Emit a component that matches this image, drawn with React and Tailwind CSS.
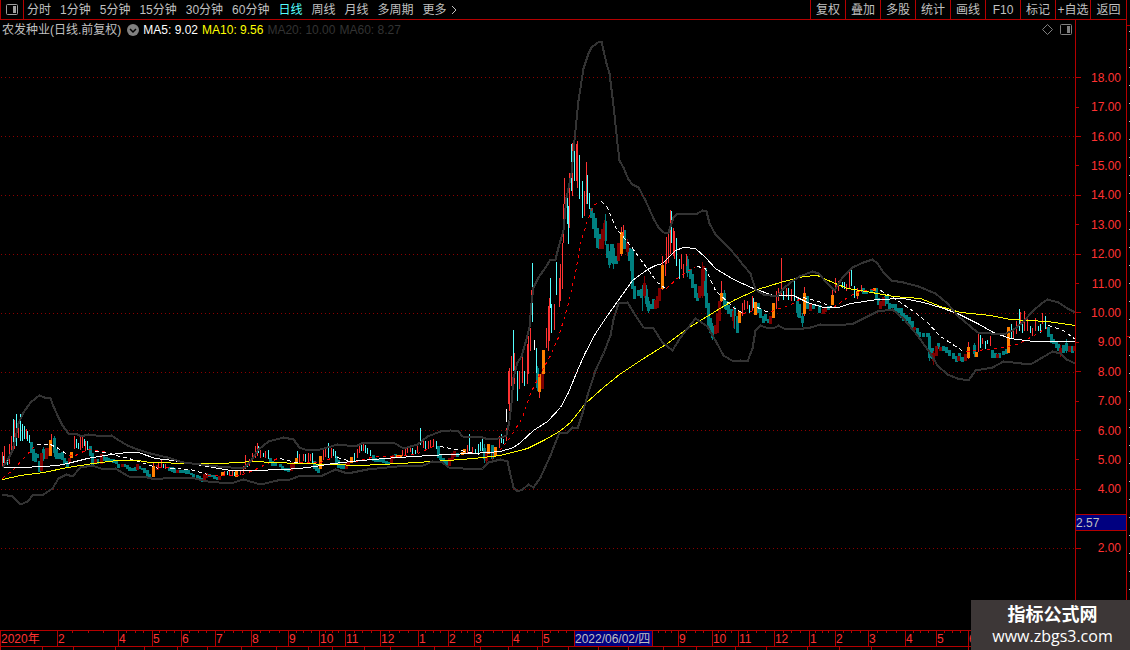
import React, { useState } from 'react';

const periodos = ['分时', '1分钟', '5分钟', '15分钟', '30分钟', '60分钟', '日线', '周线', '月线', '多周期'];
const acciones = ['复权', '叠加', '多股', '统计', '画线', 'F10', '标记', '+自选', '返回'];
const precios = [18, 17, 16, 15, 14, 13, 12, 11, 10, 9, 8, 7, 6, 5, 4, 3, 2];

// Cada mes con la posición donde empieza dentro de la escala de tiempo
const ANCHO = 1130;
const meses = [
  ['2020年', 0], ['2', 57], ['4', 118], ['5', 152], ['6', 181], ['7', 215], ['8', 251], ['9', 288],
  ['10', 319], ['11', 345], ['12', 380], ['1', 418], ['2', 448], ['3', 474], ['4', 512], ['5', 542],
  ['2022/06/02/四', 574], ['', 652], ['9', 678], ['10', 712], ['11', 738], ['12', 774], ['1', 809],
  ['2', 835], ['3', 868], ['4', 905], ['5', 936], ['6', 968],
];
const marcas = [0, 42, 73, 115, 144, 177, 207, 241, 276, 308, 332, 364, 390, 434, 480, 508, 537, 568, 598, 628, 663, 696, 735, 766, 807, 839, 871, 968];

const bandaSuperior = '2,467 7,460 12,450 15,437 18,423 23,412 30,402 35,398 39,395 44,397 50,398 53,406 58,417 62,425 68,433 76,433 80,436 88,434 103,436 111,435 117,439 127,445 137,449 150,453 167,457 183,462 200,464 217,466 243,468 250,461 258,449 268,441 283,437 293,439 299,447 307,450 320,449 337,444 355,446 363,442 393,442 403,448 417,444 427,436 440,431 450,430 458,431 462,436 482,437 488,439 498,438 506,435 509,420 511,403 513,377 517,362 521,356 525,342 529,327 531,303 533,287 538,277 545,267 550,259 555,259 558,247 563,230 566,197 571,173 574,140 578,100 583,68 588,53 591,47 595,44 599,41 601,41 603,50 606,63 609,73 613,105 617,143 619,160 623,167 628,179 632,184 638,187 645,200 653,218 658,227 663,232 668,232 673,217 677,213 697,213 702,210 706,211 709,223 715,234 722,241 729,248 736,256 743,265 750,273 755,289 763,294 777,296 783,288 790,282 799,276 812,271 818,273 827,283 834,290 842,277 852,267 863,262 872,259 877,263 883,272 891,280 903,282 918,286 935,293 947,303 957,315 970,326 977,332 1003,334 1012,330 1022,322 1033,310 1041,303 1047,299 1058,302 1067,308 1075,312';
const bandaInferior = '2,494 12,496 20,504 27,501 33,494 43,494 52,488 58,478 66,474 72,476 80,467 92,465 103,469 115,468 128,476 143,476 155,479 170,477 190,477 207,481 230,483 243,479 260,484 277,480 290,479 300,475 322,475 335,469 347,473 367,469 397,466 423,465 432,461 442,462 448,467 477,469 482,468 488,462 500,459 507,461 509,470 513,487 517,491 522,489 528,484 533,487 540,477 550,455 555,442 559,432 567,432 572,427 577,428 582,413 587,395 595,370 603,353 610,335 613,319 618,303 627,302 635,315 643,327 653,328 662,342 672,350 680,337 687,328 695,318 707,326 715,340 723,355 733,361 740,360 747,361 752,348 755,330 760,325 765,327 773,328 778,325 783,328 803,328 810,327 820,324 838,325 853,323 863,318 877,311 892,309 903,318 917,335 930,353 937,365 947,374 957,378 968,380 975,370 992,367 1003,361 1030,364 1042,357 1052,351 1060,353 1066,359 1075,363';
const mediaBlanca = '2,467 20,467 43,466 57,465 67,463 87,458 110,454 127,452 138,452 155,458 173,460 190,463 213,467 230,470 253,470 283,469 299,468 315,466 333,463 360,460 397,457 447,454 473,453 500,451 513,447 520,442 533,430 547,421 560,407 568,392 577,370 585,352 595,333 607,315 617,301 632,280 647,269 655,265 662,263 675,250 683,247 695,248 705,257 715,268 733,279 753,288 773,295 793,295 807,302 823,307 838,307 850,303 877,299 903,298 923,302 940,307 957,313 977,323 993,332 1010,338 1033,341 1075,341';
const mediaAmarilla = '2,479 20,475 43,472 67,467 93,463 117,460 137,460 150,462 190,463 220,463 253,461 273,462 300,463 360,465 400,463 447,460 473,458 500,455 527,448 543,440 559,431 570,422 585,403 603,387 619,374 640,360 667,343 687,328 713,312 733,300 757,289 780,282 803,276 817,275 830,281 847,288 877,293 893,296 920,298 940,306 960,312 990,315 1010,319 1047,321 1075,325';

// La media de 20 cambia de color según la tendencia
const media20Sube = ['2,478 13,469 25,456 35,445', '68,455 75,455 87,449 108,452', '158,467 170,467', '207,475 240,475 253,470 265,464 277,458', '299,462 320,462 333,457', '355,461 375,456 400,456 417,453 433,446', '499,450 510,437 522,417 530,393 540,373 550,355 558,337 568,303 576,267 580,243 587,220 593,205 599,201', '666,288 680,275 695,266', '743,313 753,310', '771,311 793,303 800,298', '833,307 850,295 860,291 876,288', '966,351 997,348 1017,344 1030,337 1047,327'];
const media20Baja = ['36,444 50,444 58,448 68,455', '95,451 108,452 115,455 125,457 135,460 150,465 158,468', '170,468 190,469 207,474', '280,458 299,463', '337,457 350,461', '440,446 455,449 480,454', '601,201 607,207 615,227 620,233 630,245 643,263 657,282 665,288', '697,266 705,268 715,290 733,307 743,313', '757,307 768,312', '803,297 818,301 833,307', '880,290 893,297 913,311 927,322 940,336 963,351', '1048,325 1063,330 1075,339'];

// Velas: "x,máximo,mínimo"
const rojas = '2,451,465 4,445,463 7,457,462 9,443,463 11,435,452 14,419,448 18,422,437 26,428,438 51,433,455 74,435,448 80,435,449 82,436,447 85,440,450 153,462,476 158,461,467 161,458,466 165,463,468 224,470,475 229,469,474 232,470,475 240,470,474 243,465,472 245,454,468 249,458,465 252,452,460 255,445,457 257,442,455 260,449,457 265,450,457 299,453,463 303,453,460 308,452,461 310,453,460 323,449,459 325,448,456 331,447,457 357,448,457 359,443,452 363,443,450 402,449,455 405,447,454 407,446,452 410,444,451 417,443,452 423,437,447 428,440,448 430,439,447 433,438,446 467,444,452 472,446,452 499,435,447 506,427,440 508,370,403 509,367,410 511,355,385 514,352,383 519,370,388 522,353,382 527,343,383 528,335,373 530,327,350 531,289,313 539,373,397 546,327,347 548,305,350 549,297,340 554,303,329 556,273,290 559,277,306 560,263,300 562,242,288 563,203,242 564,177,203 569,172,227 572,142,195 576,143,180 577,140,187 584,190,215 586,161,203 621,226,255 623,224,235 662,255,289 665,259,275 666,236,263 668,232,262 670,209,253 673,227,255 674,230,258 681,253,268 683,263,277 686,253,265 721,280,301 742,302,315 744,299,309 747,300,308 752,295,310 776,290,308 778,287,300 781,257,295 786,287,296 791,288,300 804,286,315 832,289,304 835,277,292 838,280,290 846,283,290 849,270,287 861,284,291 857,287,298 968,341,358 978,333,351 982,337,343 990,335,345 1013,327,337 1016,320,333 1020,311,323 1024,310,330 1027,318,330 1032,327,335 1035,317,330 1042,312,323';
const celestes = '3,455,462 7,459,464 13,418,443 16,413,445 20,413,440 22,423,440 24,425,438 27,430,440 29,434,442 76,438,447 78,442,448 84,438,445 87,440,449 163,463,467 227,470,474 234,471,475 247,462,466 258,445,452 263,452,456 268,449,458 297,450,463 305,453,461 312,452,463 328,442,457 333,448,455 335,450,457 354,452,460 361,441,450 365,444,452 367,447,453 370,449,455 412,447,453 415,449,453 420,427,444 425,440,449 436,440,448 469,433,450 475,448,452 478,443,452 480,441,450 482,438,450 501,433,442 503,438,443 513,329,370 517,370,400 524,370,385 532,262,321 536,347,372 550,277,307 551,303,332 556,261,294 567,188,223 568,205,243 571,143,190 574,150,180 579,154,198 582,180,217 587,174,203 589,192,208 671,210,242 676,237,265 679,258,278 749,304,312 753,297,307 783,290,299 788,287,299 794,280,300 842,281,287 844,281,288 851,268,285 854,285,297 980,334,347 985,340,348 987,339,343 1011,323,337 1019,308,330 1022,320,332 1030,325,332 1038,325,330 1040,323,332 1045,315,328';
const blancas = '506,408,421 534,339,349';
const verdes = '31,441,452 33,448,460 35,452,461 37,453,457 39,460,471 43,448,458 54,437,452 56,448,458 59,452,458 62,451,459 64,457,463 67,460,467 90,445,455 92,452,465 97,458,463 103,455,460 106,456,460 108,457,460 111,458,461 113,458,462 116,460,463 118,463,467 124,463,466 127,464,468 129,466,470 132,467,470 135,466,470 139,465,468 142,467,469 144,467,472 147,469,475 149,473,477 169,466,470 172,466,471 174,467,472 180,469,472 183,469,472 186,469,473 188,469,473 191,472,474 193,473,476 197,474,477 199,475,479 202,477,481 209,473,476 212,474,476 214,474,478 217,476,479 270,457,462 272,460,465 275,462,465 280,463,466 282,465,469 285,467,470 288,467,471 314,460,468 316,464,470 318,467,472 336,455,463 338,459,467 341,463,468 343,464,468 373,454,460 375,457,461 378,458,461 381,458,461 383,458,462 386,460,463 388,461,464 395,453,457 438,445,457 440,453,459 443,457,463 446,460,465 457,452,456 484,447,458 492,444,458 537,367,387 591,207,217 593,212,228 595,217,237 597,227,247 599,233,248 605,220,240 607,243,257 609,252,264 611,243,262 613,247,263 616,255,263 624,229,248 629,247,260 631,252,270 632,248,288 634,285,298 638,289,295 641,288,297 646,288,303 648,300,310 650,303,308 653,298,308 687,258,272 690,268,278 692,273,287 695,283,297 697,292,300 705,267,295 706,292,307 708,302,325 710,317,332 712,325,337 724,292,305 726,300,309 728,304,313 731,308,316 734,308,315 737,315,332 758,302,312 760,308,317 763,315,322 765,313,320 768,318,322 797,300,312 799,303,317 802,315,322 807,295,308 813,303,308 819,304,312 828,305,309 863,287,293 866,290,293 871,288,292 876,287,298 878,297,304 885,295,302 887,295,303 889,302,308 892,303,307 895,303,310 898,307,312 901,307,317 903,312,320 906,314,320 909,316,324 912,320,328 917,327,333 919,331,336 923,332,336 927,332,336 929,335,357 932,347,358 938,342,348 943,345,350 946,346,352 949,349,355 953,352,358 956,355,361 959,352,360 962,356,361 974,344,353 992,349,357 995,352,357 999,352,357 1003,350,354 1006,348,353 1048,326,336 1051,333,342 1053,338,343 1056,341,347 1058,343,350 1063,344,352 1066,342,350 1072,345,352';
const mechas = '54,435,456 43,446,460 484,443,462 537,365,390 605,213,244 609,250,267 613,243,268 646,284,306 648,296,312 631,248,272 687,255,276 724,289,308 734,305,328 712,322,339 797,296,316 802,312,326 885,293,305 929,332,360 1066,338,352 974,342,356 642,284,310';
const granates = '41,452,470 46,447,458 48,447,455 69,457,462 95,458,463 101,453,463 122,463,466 137,463,469 157,464,469 177,469,472 204,473,480 206,472,477 219,475,479 291,462,470 293,461,468 346,462,468 348,460,465 391,456,463 393,454,458 449,457,465 452,452,460 454,450,456 486,452,460 542,372,388 600,238,248 602,228,248 604,222,237 618,242,260 627,242,251 644,282,295 655,299,308 657,295,307 659,287,300 699,285,297 702,268,295 703,265,280 715,324,333 717,312,332 719,300,320 733,310,320 770,315,323 810,303,310 823,308,313 825,307,311 880,300,308 883,296,305 914,326,329 933,352,360 936,345,355 940,346,350 958,355,360 965,353,360 997,353,357 1060,347,353 1069,345,351 1074,345,350';
const mechasGranate = '486,450,465 644,275,297 702,261,297 627,238,255 492,452,462 933,350,364 733,306,327 604,219,240 1060,344,356';
const naranjas = '50,439,455 71,451,457 153,465,476 222,471,475 236,469,476 296,457,463 320,455,468 351,456,462 397,454,457 400,454,457 462,451,454 464,448,453 488,443,453 495,446,455 539,373,391 543,349,373 621,231,253 662,264,288 721,292,300 739,310,322 755,301,314 773,302,317 804,292,313 832,294,304 857,290,295 874,287,290 968,346,357 976,351,356 1008,326,352';

const aTrazo = velas =>
  velas.split(' ').map(vela => {
    const [x, alto, bajo] = vela.split(',');
    return `M${x} ${alto}V${bajo}`;
  }).join('');

const Grafico = () => (
  <svg
    viewBox="0 39 1075 591"
    preserveAspectRatio="none"
    shapeRendering="crispEdges"
    fill="none"
    className="block w-full flex-1 min-h-0"
  >
    <g transform="translate(0.5 0.5)">
      {precios.filter(p => p % 2 === 0).map(p => (
        <path key={p} d={`M0.5 ${Math.round(607 - p * 29.43)}H1075`} stroke="#8c0000" strokeDasharray="1 3" />
      ))}
      <path d={aTrazo(verdes)} stroke="#008080" strokeWidth="3" />
      <path d={aTrazo(granates)} stroke="#800000" strokeWidth="3" />
      <path d={aTrazo(mechasGranate)} stroke="#800000" />
      <path d={aTrazo(mechas)} stroke="#008080" />
      <path d={aTrazo(rojas)} stroke="#ff3232" />
      <path d={aTrazo(celestes)} stroke="#54ffff" />
      <path d={aTrazo(blancas)} stroke="#ffffff" />
      <path d={aTrazo(naranjas)} stroke="#ff8000" strokeWidth="3" />
      {media20Sube.map(puntos => (
        <polyline key={puntos} points={puntos} stroke="#ff0000" strokeDasharray="3 4" />
      ))}
      {media20Baja.map(puntos => (
        <polyline key={puntos} points={puntos} stroke="#ffffff" strokeDasharray="4 3" />
      ))}
      <polyline points={mediaAmarilla} stroke="#ffff00" />
      <polyline points={mediaBlanca} stroke="#ffffff" />
      <polyline points={bandaSuperior} stroke="#333333" strokeWidth="2" strokeLinejoin="round" />
      <polyline points={bandaInferior} stroke="#333333" strokeWidth="2" strokeLinejoin="round" />
    </g>
  </svg>
);

const IconoPanel = ({ className }) => (
  <svg viewBox="0 0 12 11" fill="none" className={className}>
    <rect x="0.5" y="0.5" width="11" height="10" rx="1" stroke="currentColor" />
    <rect x="7" y="2" width="3" height="7" fill="currentColor" />
  </svg>
);

const BarraSuperior = ({ periodo, setPeriodo }) => (
  <header className="flex h-5 shrink-0 justify-between border-b border-[#b40000]">
    <nav className="flex items-center gap-[9px]">
      <button aria-label="面板" className="-mr-1.5 flex h-full w-6 items-center justify-center border-x border-[#b40000]">
        <IconoPanel className="h-[11px] w-3 text-[#a0a0a0]" />
      </button>
      {periodos.map(p => (
        <button
          key={p}
          onClick={() => setPeriodo(p)}
          className={p === periodo ? 'text-[#54ffff]' : 'hover:text-white'}
        >
          {p}
        </button>
      ))}
      <button className="flex items-center gap-1 hover:text-white">
        更多
        <svg viewBox="0 0 6 10" fill="none" className="h-[10px] w-[6px]">
          <path d="M1 1L5 5L1 9" stroke="currentColor" />
        </svg>
      </button>
    </nav>
    <div className="flex">
      {acciones.map(a => (
        <button key={a} className="w-[35px] border-l border-[#b40000] text-center whitespace-nowrap last:w-9 hover:text-white">
          {a}
        </button>
      ))}
    </div>
  </header>
);

const Leyenda = () => (
  <div className="flex h-[19px] shrink-0 items-center justify-between pr-[3px] pl-[2px]">
    <div className="flex items-center gap-1 whitespace-nowrap">
      <span className="pr-0.5">农发种业(日线.前复权)</span>
      <button aria-label="指标" className="flex size-3 items-center justify-center rounded-full bg-[#808080]">
        <svg viewBox="0 0 8 8" fill="none" className="size-2">
          <path d="M1 3L4 6L7 3" stroke="#000000" strokeWidth="1.5" />
        </svg>
      </button>
      <span className="text-white">MA5: 9.02</span>
      <span className="text-[#ffff00]">MA10: 9.56</span>
      <span className="text-[#333333]">MA20: 10.00</span>
      <span className="text-[#333333]">MA60: 8.27</span>
    </div>
    <div className="flex items-center gap-[7px] text-[#808080]">
      <svg viewBox="0 0 11 11" fill="none" className="size-[11px]">
        <path d="M5.5 0.5L10.5 5.5L5.5 10.5L0.5 5.5Z" stroke="currentColor" />
      </svg>
      <IconoPanel className="h-[11px] w-3" />
    </div>
  </div>
);

const EjePrecios = () => (
  <div className="relative flex w-[51px] shrink-0 flex-col border-l border-[#b40000] pt-[43px] pb-[67px] text-[#ff3232]">
    {precios.map(p => (
      <div key={p} className="flex min-h-0 flex-1 items-center justify-between pr-[5px]">
        <span className={p % 2 === 0 ? 'h-px w-[5px] bg-[#b40000]' : 'h-px w-[3px] bg-[#b40000]'} />
        <span>{p.toFixed(2)}</span>
      </div>
    ))}
    <div className="absolute inset-x-0 top-[81%] flex h-[17px] items-center border-y border-[#b40000] bg-[#000080] text-[#c0c0c0]">
      2.57
    </div>
  </div>
);

const EjeTiempo = () => (
  <div className="flex h-[17px] shrink-0 border-y border-[#b40000] text-[#ff3232]">
    {meses.map(([mes, inicio], i) => {
      const fin = i + 1 < meses.length ? meses[i + 1][1] : ANCHO;
      const elegido = mes.length > 6;
      return (
        <div
          key={inicio}
          className={`relative flex items-center overflow-hidden whitespace-nowrap border-l border-[#b40000] ${elegido ? 'bg-[#000080] text-[#c0c0c0]' : ''}`}
          style={{ width: `${((fin - inicio) / ANCHO) * 100}%` }}
        >
          {mes}
          {i > 0 && !elegido && (
            <div className="absolute inset-x-0 top-0 flex justify-evenly">
              <span className="h-[2px] w-px bg-[#b40000]" />
              <span className="h-[2px] w-px bg-[#b40000]" />
              <span className="h-[2px] w-px bg-[#b40000]" />
            </div>
          )}
        </div>
      );
    })}
  </div>
);

const App = () => {
  const [periodo, setPeriodo] = useState('日线');

  return (
    <div className="relative flex h-screen flex-col overflow-hidden bg-black font-['Liberation_Sans','Noto_Sans_CJK_SC',sans-serif] text-[12px] leading-4 text-[#c0c0c0]">
      <div className="flex min-h-0 flex-1">
        <div className="flex min-w-0 flex-1 flex-col">
          <BarraSuperior periodo={periodo} setPeriodo={setPeriodo} />
          <main className="flex min-h-0 flex-1">
            <section className="flex min-w-0 flex-1 flex-col">
              <Leyenda />
              <Grafico />
            </section>
            <EjePrecios />
          </main>
        </div>
        <aside className="flex w-1 shrink-0 justify-end border-l border-[#b40000]">
          <svg viewBox="0 0 3 630" preserveAspectRatio="none" shapeRendering="crispEdges" className="h-full w-[3px]">
            <path d="M0 25.5H3M0 336.5H3" stroke="#b40000" />
            <path d="M2.5 31V630" stroke="#c0c0c0" strokeDasharray="1 17" />
          </svg>
        </aside>
      </div>

      <EjeTiempo />
      <div className="flex h-[3px] shrink-0">
        {marcas.map((inicio, i) => (
          <span
            key={inicio}
            className="border-l border-[#b40000]"
            style={{ width: `${(((marcas[i + 1] || ANCHO) - inicio) / ANCHO) * 100}%` }}
          />
        ))}
      </div>

      {/* Marca de agua */}
      <div className="absolute right-0 bottom-0 flex h-[50px] w-[159px] flex-col items-center justify-center bg-[#3d3737] pl-1 text-white">
        <strong className="text-[18px] leading-[22px] font-bold">指标公式网</strong>
        <span className="font-['Open_Sans',sans-serif] text-[16px] leading-5">www.zbgs3.com</span>
      </div>
    </div>
  );
};

export default App;
